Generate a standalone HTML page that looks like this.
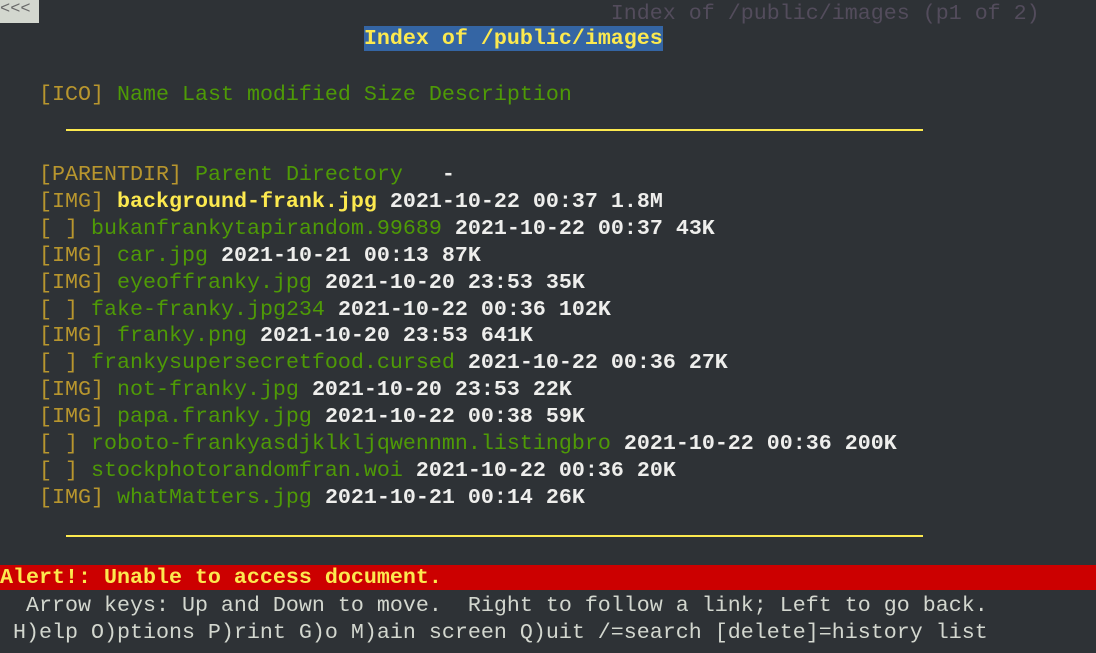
<!DOCTYPE html>
<html><head><meta charset="utf-8"><style>
html,body{margin:0;padding:0;background:#2e3236;width:1096px;height:653px;overflow:hidden}
.r{position:absolute;left:0;height:27px;line-height:27px;white-space:pre;font-family:"Liberation Mono","DejaVu Sans Mono",monospace;font-size:21.67px;color:#d3d7cf}
.y{color:#b8962e}.g{color:#4e9a06}.w{color:#eeeeec;font-weight:bold}.b{color:#fce94f;font-weight:bold}
.hr{position:absolute;left:66px;width:857px;height:2px;background:#fce94f}
</style></head><body>
<div class="r" style="top:-2px"><span style="background:#d3d7cf;color:#6a6a6a;font-size:17px;display:inline-block;width:39px;height:25px;line-height:24px;vertical-align:top">&lt;&lt;&lt;</span></div>
<div class="r" style="top:0px;color:#534c5c">                                               Index of /public/images (p1 of 2)</div>
<div class="r" style="top:25px">                            <span class="b" style="background:#3465a4">Index of /public/images</span></div>
<div class="r" style="top:81px">   <span class="y">[ICO]</span> <span class="g">Name Last modified Size Description</span></div>
<div class="hr" style="top:129px"></div>
<div class="r" style="top:161px">   <span class="y">[PARENTDIR]</span> <span class="g">Parent Directory</span>   <span class="w">-</span></div>
<div class="r" style="top:188px">   <span class="y">[IMG]</span> <span class="b">background-frank.jpg</span> <span class="w">2021-10-22 00:37 1.8M</span></div>
<div class="r" style="top:215px">   <span class="y">[ ]</span> <span class="g">bukanfrankytapirandom.99689</span> <span class="w">2021-10-22 00:37 43K</span></div>
<div class="r" style="top:242px">   <span class="y">[IMG]</span> <span class="g">car.jpg</span> <span class="w">2021-10-21 00:13 87K</span></div>
<div class="r" style="top:269px">   <span class="y">[IMG]</span> <span class="g">eyeoffranky.jpg</span> <span class="w">2021-10-20 23:53 35K</span></div>
<div class="r" style="top:296px">   <span class="y">[ ]</span> <span class="g">fake-franky.jpg234</span> <span class="w">2021-10-22 00:36 102K</span></div>
<div class="r" style="top:322px">   <span class="y">[IMG]</span> <span class="g">franky.png</span> <span class="w">2021-10-20 23:53 641K</span></div>
<div class="r" style="top:349px">   <span class="y">[ ]</span> <span class="g">frankysupersecretfood.cursed</span> <span class="w">2021-10-22 00:36 27K</span></div>
<div class="r" style="top:376px">   <span class="y">[IMG]</span> <span class="g">not-franky.jpg</span> <span class="w">2021-10-20 23:53 22K</span></div>
<div class="r" style="top:403px">   <span class="y">[IMG]</span> <span class="g">papa.franky.jpg</span> <span class="w">2021-10-22 00:38 59K</span></div>
<div class="r" style="top:430px">   <span class="y">[ ]</span> <span class="g">roboto-frankyasdjklkljqwennmn.listingbro</span> <span class="w">2021-10-22 00:36 200K</span></div>
<div class="r" style="top:457px">   <span class="y">[ ]</span> <span class="g">stockphotorandomfran.woi</span> <span class="w">2021-10-22 00:36 20K</span></div>
<div class="r" style="top:484px">   <span class="y">[IMG]</span> <span class="g">whatMatters.jpg</span> <span class="w">2021-10-21 00:14 26K</span></div>
<div class="hr" style="top:535px"></div>
<div class="r" style="top:565px;width:1096px;height:25px;line-height:26px;background:#cc0000"><span class="b">Alert!: Unable to access document.</span></div>
<div class="r" style="top:592px">  Arrow keys: Up and Down to move.  Right to follow a link; Left to go back.</div>
<div class="r" style="top:619px"> H)elp O)ptions P)rint G)o M)ain screen Q)uit /=search [delete]=history list</div>
</body></html>
